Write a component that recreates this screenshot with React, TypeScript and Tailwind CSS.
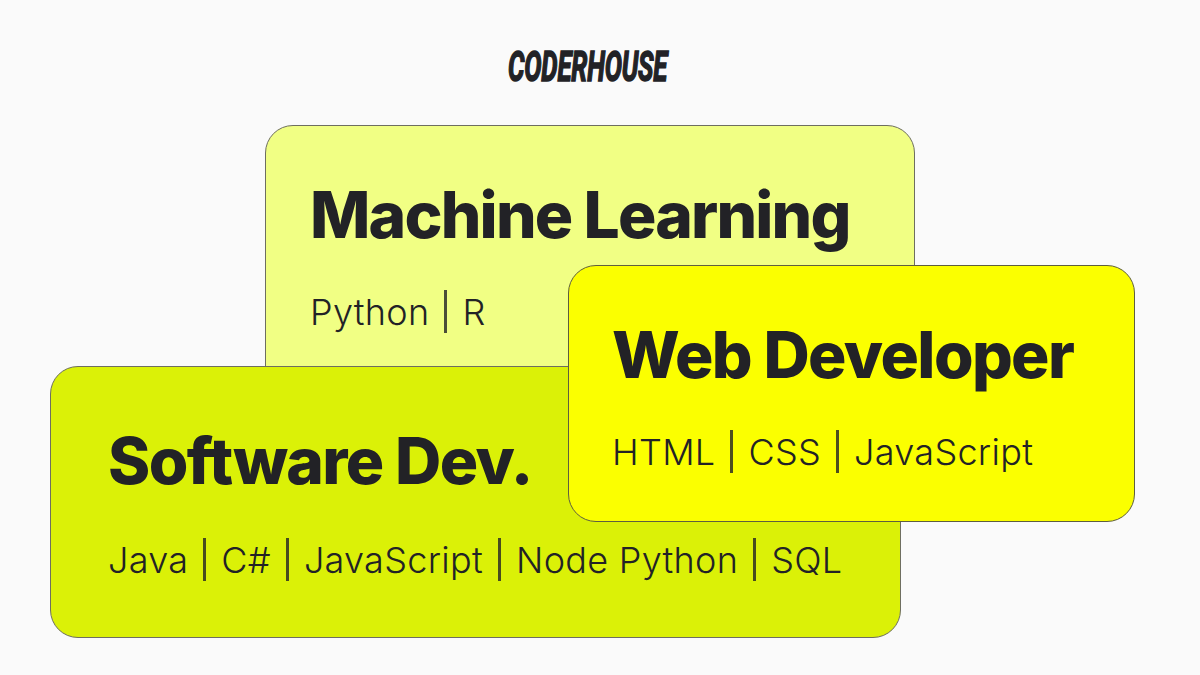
export default function App() {
  const Sep = () => <span className="inline-block w-[3px] h-[43px] bg-[#222226]/80 shrink-0" />;
  return (
    <div className="relative w-[1200px] h-[675px] overflow-hidden bg-[#fafafa] text-[#222226] font-['Inter',sans-serif]">
      <div className="absolute left-[506px] top-[44px] w-[164px] h-[44px] flex items-center justify-center">
        <span className="font-['Liberation_Sans_Narrow','Roboto',sans-serif] font-bold italic text-[43px] leading-none tracking-[-0.3px] text-[#222226] whitespace-nowrap scale-x-[0.6] origin-center [-webkit-text-stroke:1.6px_#222226]">CODERHOUSE</span>
      </div>

      <div className="absolute left-[265px] top-[125px] w-[650px] h-[300px] rounded-[28px] border border-[#6e6e60] bg-[#f1ff84] pl-[44px] pt-[51px]">
        <div className="text-[64px] leading-[76px] font-extrabold tracking-[-1.8px] whitespace-nowrap">Machine Learning</div>
        <div className="mt-[37px] h-[43px] flex items-center gap-[15px] text-[36px] font-light tracking-[0.3px]">
          <span>Python</span><Sep /><span>R</span>
        </div>
      </div>

      <div className="absolute left-[50px] top-[366px] w-[851px] h-[272px] rounded-[28px] border border-[#6e6e60] bg-[#dbf107] pl-[57px] pt-[58px]">
        <div className="text-[64px] leading-[72px] font-extrabold tracking-[-1.6px] whitespace-nowrap">Software Dev.</div>
        <div className="mt-[41px] h-[43px] flex items-center gap-[15px] text-[36px] font-light tracking-[0.3px] whitespace-nowrap">
          <span>Java</span><Sep /><span>C#</span><Sep /><span>JavaScript</span><Sep /><span>Node Python</span><Sep /><span>SQL</span>
        </div>
      </div>

      <div className="absolute left-[568px] top-[265px] w-[567px] h-[257px] rounded-[28px] border border-[#5e5e40] bg-[#fbff00] pl-[43px] pt-[51px]">
        <div className="text-[64px] leading-[76px] font-extrabold tracking-[-1.6px] whitespace-nowrap">Web Developer</div>
        <div className="mt-[37px] h-[43px] flex items-center gap-[15px] text-[36px] font-light tracking-[0.3px] whitespace-nowrap">
          <span>HTML</span><Sep /><span>CSS</span><Sep /><span>JavaScript</span>
        </div>
      </div>
    </div>
  );
}
